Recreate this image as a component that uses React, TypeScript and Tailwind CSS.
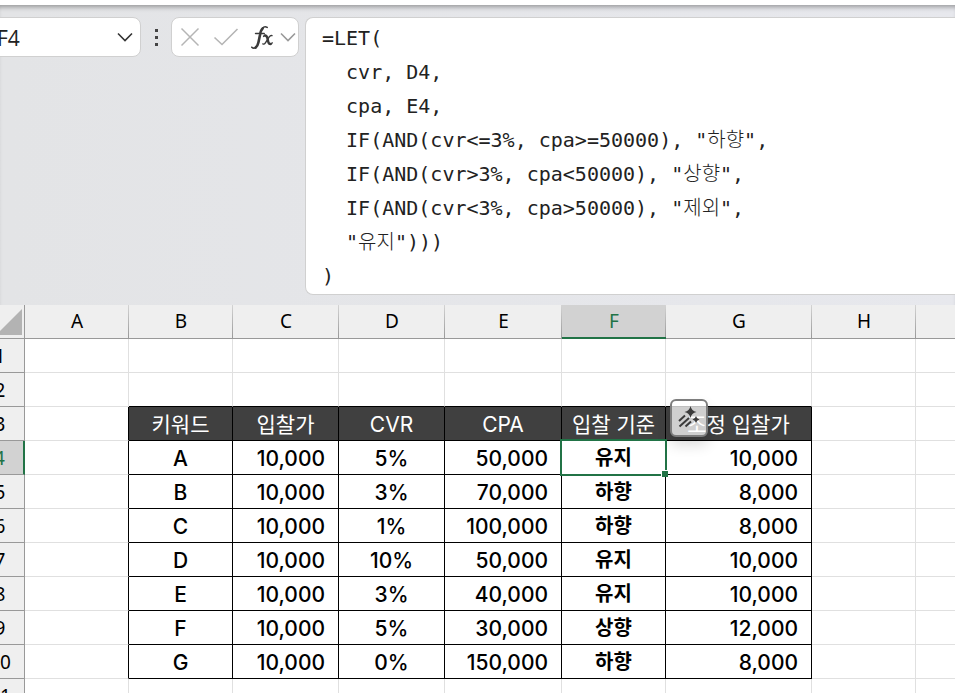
import { useState } from "react"
import clsx from "clsx"

const FORMULA = `=LET(
  cvr, D4,
  cpa, E4,
  IF(AND(cvr<=3%, cpa>=50000), "하향",
  IF(AND(cvr>3%, cpa<50000), "상향",
  IF(AND(cvr<3%, cpa>50000), "제외",
  "유지")))
)`

const COLUMNS = [
  { name: "A", width: "w-[104px]" },
  { name: "B", width: "w-[104px]" },
  { name: "C", width: "w-[106px]" },
  { name: "D", width: "w-[106px]" },
  { name: "E", width: "w-[117px]" },
  { name: "F", width: "w-[104px]" },
  { name: "G", width: "w-[146px]" },
  { name: "H", width: "w-[104px]" },
  { name: "I", width: "w-[146px]" },
]

const TABLE_COLUMNS = ["B", "C", "D", "E", "F", "G"]
const FIRST_ROW = 3
const LAST_ROW = 10
const ROWS = Array.from({ length: 12 }, (_, i) => i + 1)

const DATA: Record<number, string[]> = {
  3: ["키워드", "입찰가", "CVR", "CPA", "입찰 기준", "조정 입찰가"],
  4: ["A", "10,000", "5%", "50,000", "유지", "10,000"],
  5: ["B", "10,000", "3%", "70,000", "하향", "8,000"],
  6: ["C", "10,000", "1%", "100,000", "하향", "8,000"],
  7: ["D", "10,000", "10%", "50,000", "유지", "10,000"],
  8: ["E", "10,000", "3%", "40,000", "유지", "10,000"],
  9: ["F", "10,000", "5%", "30,000", "상향", "12,000"],
  10: ["G", "10,000", "0%", "150,000", "하향", "8,000"],
}

function Chevron({ className }: { className?: string }) {
  return (
    <svg viewBox="0 0 16 10" className={clsx("h-[10px] w-4", className)} fill="none" stroke="currentColor" strokeWidth="1.6">
      <path d="M1 1.5 8 8.5 15 1.5" />
    </svg>
  )
}

function FormulaBar() {
  const [formula, setFormula] = useState(FORMULA)
  const [cell, setCell] = useState("F4")

  return (
    <div className="flex shrink-0 items-start bg-linear-to-r from-[#e3e4e6] to-[#e7e8ed] pb-[10px] pt-3 shadow-[inset_0_5px_5px_-3px_rgba(0,0,0,0.35)]">
      <div className="-ml-4 flex h-10 w-[157px] shrink-0 items-center rounded-lg border border-[#d0d0d0] bg-white pl-3 pr-[7px]">
        <input
          aria-label="Name box"
          value={cell}
          onChange={(e) => setCell(e.target.value)}
          className="min-w-0 flex-1 bg-transparent pt-1 font-['Open_Sans','Noto_Sans',sans-serif] text-[21px] text-[#222] outline-none"
        />
        <button aria-label="Open name list" className="text-[#333]">
          <Chevron />
        </button>
      </div>

      <div className="flex h-10 w-[30px] shrink-0 flex-col items-center justify-center gap-1">
        <span className="size-[3px] bg-[#444]" />
        <span className="size-[3px] bg-[#444]" />
        <span className="size-[3px] bg-[#444]" />
      </div>

      <div className="flex h-10 w-32 shrink-0 items-center rounded-lg border border-[#d0d0d0] bg-white pl-2 pr-[2px]">
        <button aria-label="Cancel" className="text-[#b5b5b5]">
          <svg viewBox="0 0 20 20" className="size-5" fill="none" stroke="currentColor" strokeWidth="1.5">
            <path d="M1.5 1.5 18.5 18.5M18.5 1.5 1.5 18.5" />
          </svg>
        </button>
        <button aria-label="Enter" className="ml-[13px] text-[#b5b5b5]">
          <svg viewBox="0 0 26 20" className="h-5 w-[26px]" fill="none" stroke="currentColor" strokeWidth="1.6">
            <path d="M1.5 10.5 9 17.5 24.5 2" />
          </svg>
        </button>
        <button aria-label="Insert function" className="ml-3 text-[#3b3b3b]">
          <svg viewBox="0 0 24 26" className="h-[26px] w-6" fill="none" stroke="currentColor" strokeLinecap="round">
            <path strokeWidth="2.6" d="M11.600 4.500Q9.800 6 9 11L7.400 18.500Q6.600 22.200 4.600 23.600" />
            <path strokeWidth="1.6" d="M16.200 3.400Q13.400 1.600 11.400 4.600M4.800 23.400Q2.600 25 .8 23.200M4.600 9.500H13.200" />
            <path strokeWidth="2.400" d="M14 11.500Q15.800 11.500 16.500 14.500L17.300 18Q17.800 20 19.400 20" />
            <path strokeWidth="1.400" d="M12.600 12.400Q13.200 11.200 14.300 11.400M21 11.600Q19.600 11 18.400 12.700L14.400 18.800Q13.200 20.600 11.800 19.900M19 20.200Q20.600 20.400 21.200 18.800" />
          </svg>
        </button>
        <button aria-label="More functions" className="ml-auto text-[#999]">
          <Chevron />
        </button>
      </div>

      <textarea
        aria-label="Formula"
        rows={8}
        wrap="off"
        spellCheck={false}
        value={formula}
        onChange={(e) => setFormula(e.target.value)}
        className="ml-[6px] min-w-0 flex-1 resize-none overflow-hidden rounded-l-lg border border-r-0 border-[#d0d0d0] bg-white pb-px pl-4 pt-[3px] font-['DejaVu_Sans_Mono','Noto_Sans_CJK_KR',monospace] text-[20px] font-light leading-[34px] text-[#222] outline-none"
      />
    </div>
  )
}

function AnalysisButton() {
  return (
    <button
      aria-label="Quick analysis"
      className="absolute -top-2 left-1 z-20 flex size-[38px] items-center justify-center rounded-md border-2 border-[#7d7d7d] bg-white/75 shadow-[0_8px_14px_rgba(0,0,0,0.14)]"
    >
      <svg viewBox="0 0 24 24" className="size-6" fill="#3b3b3b" stroke="#3b3b3b">
        <path strokeWidth="0" d="M13.500 0q1 5 6 6q-5 1-6 6q-1-5-6-6q5-1 6-6zM19 10q.7 3 3.500 3.500q-2.800.7-3.500 3.500q-.7-2.800-3.500-3.500q2.800-.5 3.500-3.500z" />
        <path fill="none" strokeWidth="2" d="M2 15 8 9.500M2.500 20.500 12 12M8.500 20.500 14 15.500" />
      </svg>
    </button>
  )
}

function borderColors(row: number, column: string) {
  const inRows = row >= FIRST_ROW && row <= LAST_ROW
  const inColumns = TABLE_COLUMNS.includes(column)
  return clsx(
    inRows && (inColumns || column === "A") ? "border-r-black" : "border-r-[#e0e0e0]",
    inColumns && row >= FIRST_ROW - 1 && row <= LAST_ROW ? "border-b-black" : "border-b-[#e0e0e0]"
  )
}

function alignment(row: number, column: string) {
  if (row !== FIRST_ROW && (column === "C" || column === "E" || column === "G")) {
    return "text-right pr-[13px]"
  }
  return "text-center"
}

function textStyle(row: number, column: string) {
  if (row === FIRST_ROW) return "bg-[#404040] text-[21px] text-white"
  if (column === "F") return "text-[20px] font-bold"
  return "text-[21px] font-medium"
}

function Cell({ row, column }: { row: number; column: string }) {
  const index = TABLE_COLUMNS.indexOf(column)
  const text = index >= 0 ? DATA[row]?.[index] : undefined
  const selected = row === 4 && column === "F"

  return (
    <td
      className={clsx(
        "relative h-[34px] whitespace-nowrap border-b border-r p-0 pt-[2px] leading-[31px]",
        borderColors(row, column),
        alignment(row, column),
        text && textStyle(row, column)
      )}
    >
      {text}
      {selected && (
        <span className="absolute -inset-[2px] z-10 border-2 border-[#217346]">
          <span className="absolute -bottom-[3px] -right-[3px] size-[7px] border-l border-t border-white bg-[#217346]" />
        </span>
      )}
      {row === FIRST_ROW && column === "G" && <AnalysisButton />}
    </td>
  )
}

function Sheet() {
  return (
    <div className="min-h-0 flex-1 overflow-hidden">
      <table className="-ml-6 w-[1086px] table-fixed border-separate border-spacing-0 bg-white font-['Inter','Noto_Sans_CJK_KR',sans-serif] text-black">
        <thead className="bg-[#efefef] font-['Noto_Sans','Noto_Sans_CJK_KR',sans-serif] text-[19px]">
          <tr>
            <th className="h-[34px] w-[49px] border-b border-r border-[#999] p-0">
              <svg viewBox="0 0 26 26" className="ml-auto mr-[2px] size-[26px]" fill="#b3b3b3">
                <path d="M26 0V26H0z" />
              </svg>
            </th>
            {COLUMNS.map((c) => (
              <th
                key={c.name}
                scope="col"
                className={clsx(
                  "h-[34px] bg-linear-to-b from-[#d4d4d4] to-[#999] bg-[length:1px_100%] bg-right bg-no-repeat p-0 font-normal leading-[30px]",
                  c.width,
                  c.name === "F"
                    ? "border-b-2 border-[#217346] bg-[#d2d2d2] text-[#217346]"
                    : "border-b border-[#999] pb-px"
                )}
              >
                {c.name}
              </th>
            ))}
          </tr>
        </thead>
        <tbody>
          {ROWS.map((row) => (
            <tr key={row}>
              <th
                scope="row"
                className={clsx(
                  "h-[34px] border-b border-r border-[#999] p-0 pt-[2px] font-['Noto_Sans',sans-serif] text-[19px] font-normal leading-[31px]",
                  row === 4 ? "border-r-2 border-r-[#217346] bg-[#d2d2d2] text-[#217346]" : "bg-[#efefef]"
                )}
              >
                {row}
              </th>
              {COLUMNS.map((c) => (
                <Cell key={c.name} row={row} column={c.name} />
              ))}
            </tr>
          ))}
        </tbody>
      </table>
    </div>
  )
}

export default function App() {
  return (
    <div className="flex h-screen flex-col overflow-hidden bg-white">
      <div className="h-[5px] shrink-0 bg-white" />
      <FormulaBar />
      <Sheet />
    </div>
  )
}
